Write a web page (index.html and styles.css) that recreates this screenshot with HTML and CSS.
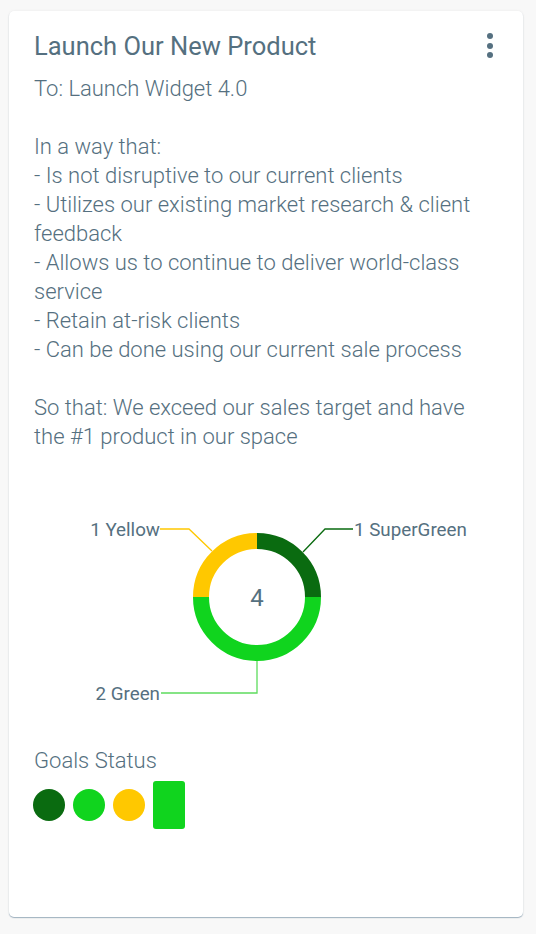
FILE: index.html
```html
<!DOCTYPE html>
<html>
<head>
<meta charset="utf-8">
<link rel="stylesheet" href="styles.css">
</head>
<body>
<div class="card">
  <div class="card-header">
    <h2 class="title">Launch Our New Product</h2>
    <button class="menu" aria-label="More">
      <svg width="8" height="26" viewBox="0 0 8 26"><circle cx="4" cy="3" r="3" fill="#557080"/><circle cx="4" cy="13" r="3" fill="#557080"/><circle cx="4" cy="22" r="3" fill="#557080"/></svg>
    </button>
  </div>
  <div class="desc">
    <p>To: Launch Widget 4.0</p>
    <p>In a way that:<br>- Is not disruptive to our current clients<br>- Utilizes our existing market research &amp; client feedback<br>- Allows us to continue to deliver world-class service<br>- Retain at-risk clients<br>- Can be done using our current sale process</p>
    <p>So that: We exceed our sales target and have the #1 product in our space</p>
  </div>
  <div class="chart">
    <svg width="514" height="220" viewBox="0 0 514 220">
      <g transform="translate(248,96)">
        <path d="M0,-56 A56,56 0 0 1 56,0" fill="none" stroke="#0a6b10" stroke-width="16"/>
        <path d="M56,0 A56,56 0 0 1 -56,0" fill="none" stroke="#10d41e" stroke-width="16"/>
        <path d="M-56,0 A56,56 0 0 1 0,-56" fill="none" stroke="#ffc800" stroke-width="16"/>
        <text x="0" y="9" text-anchor="middle" class="center">4</text>
      </g>
      <polyline points="203,50 180,28 151,28" fill="none" stroke="#ffc800" stroke-width="1.3"/>
      <polyline points="294,51 316,28 344,28" fill="none" stroke="#0a6b10" stroke-width="1.3"/>
      <polyline points="248,160 248,192 152,192" fill="none" stroke="#5ddc5d" stroke-width="1.3"/>
      <text x="151" y="34.5" text-anchor="end" class="lbl">1 Yellow</text>
      <text x="345" y="34.5" class="lbl">1 SuperGreen</text>
      <text x="151" y="198.5" text-anchor="end" class="lbl">2 Green</text>
    </svg>
  </div>
  <div class="status">
    <div class="status-title">Goals Status</div>
    <div class="dots">
      <span class="dot dark"></span>
      <span class="dot green"></span>
      <span class="dot yellow"></span>
      <span class="bar"></span>
    </div>
  </div>
</div>
</body>
</html>
```
FILE: styles.css
```css
* { box-sizing: border-box; }
html, body { margin: 0; padding: 0; }
body {
  background: #f8f8f8;
  font-family: Roboto, "Liberation Sans", sans-serif;
  color: #557080;
  width: 536px;
  height: 934px;
  overflow: hidden;
}
.card {
  margin: 11px 0 0 9px;
  width: 514px;
  height: 906px;
  background: #fff;
  border-radius: 5px;
  box-shadow: 0 1px 1px rgba(150,170,185,0.9), 0 0 3px rgba(0,0,0,0.06);
  padding: 20px 24px 0 25px;
  display: flex;
  flex-direction: column;
}
.card-header {
  display: flex;
  justify-content: space-between;
  align-items: flex-start;
}
.title {
  margin: 0;
  font-size: 25.5px;
  font-weight: 400;
  line-height: 30px;
  color: #557080;
}
.menu {
  border: 0;
  background: none;
  padding: 0;
  margin: 2px 5px 0 0;
  width: 8px;
  height: 26px;
  display: block;
}
.menu svg { display: block; }
.desc {
  margin-top: 13px;
  font-size: 22px;
  font-weight: 300;
  line-height: 29px;
  color: #557080;
}
.desc p { margin: 0 0 29px 0; }
.desc p:last-child { margin-bottom: 0; }
.chart {
  margin: 50px 0 0 -25px;
  height: 220px;
}
.chart svg { display: block; }
.lbl {
  font-family: Roboto, "Liberation Sans", sans-serif;
  font-size: 18.8px;
  fill: #557080;
}
.center {
  font-family: Roboto, "Liberation Sans", sans-serif;
  font-size: 24px;
  fill: #557080;
}
.status { margin-top: 26px; }
.status-title {
  font-size: 22px;
  font-weight: 300;
  line-height: 28px;
}
.dots {
  display: flex;
  align-items: center;
  gap: 8px;
  margin: 6px 0 0 -1px;
}
.dot {
  width: 32px;
  height: 32px;
  border-radius: 50%;
  display: block;
}
.dark { background: #0a6b10; }
.green { background: #10d41e; }
.yellow { background: #ffc800; }
.bar {
  width: 32px;
  height: 48px;
  border-radius: 3px;
  background: #10d41e;
  display: block;
}
```
